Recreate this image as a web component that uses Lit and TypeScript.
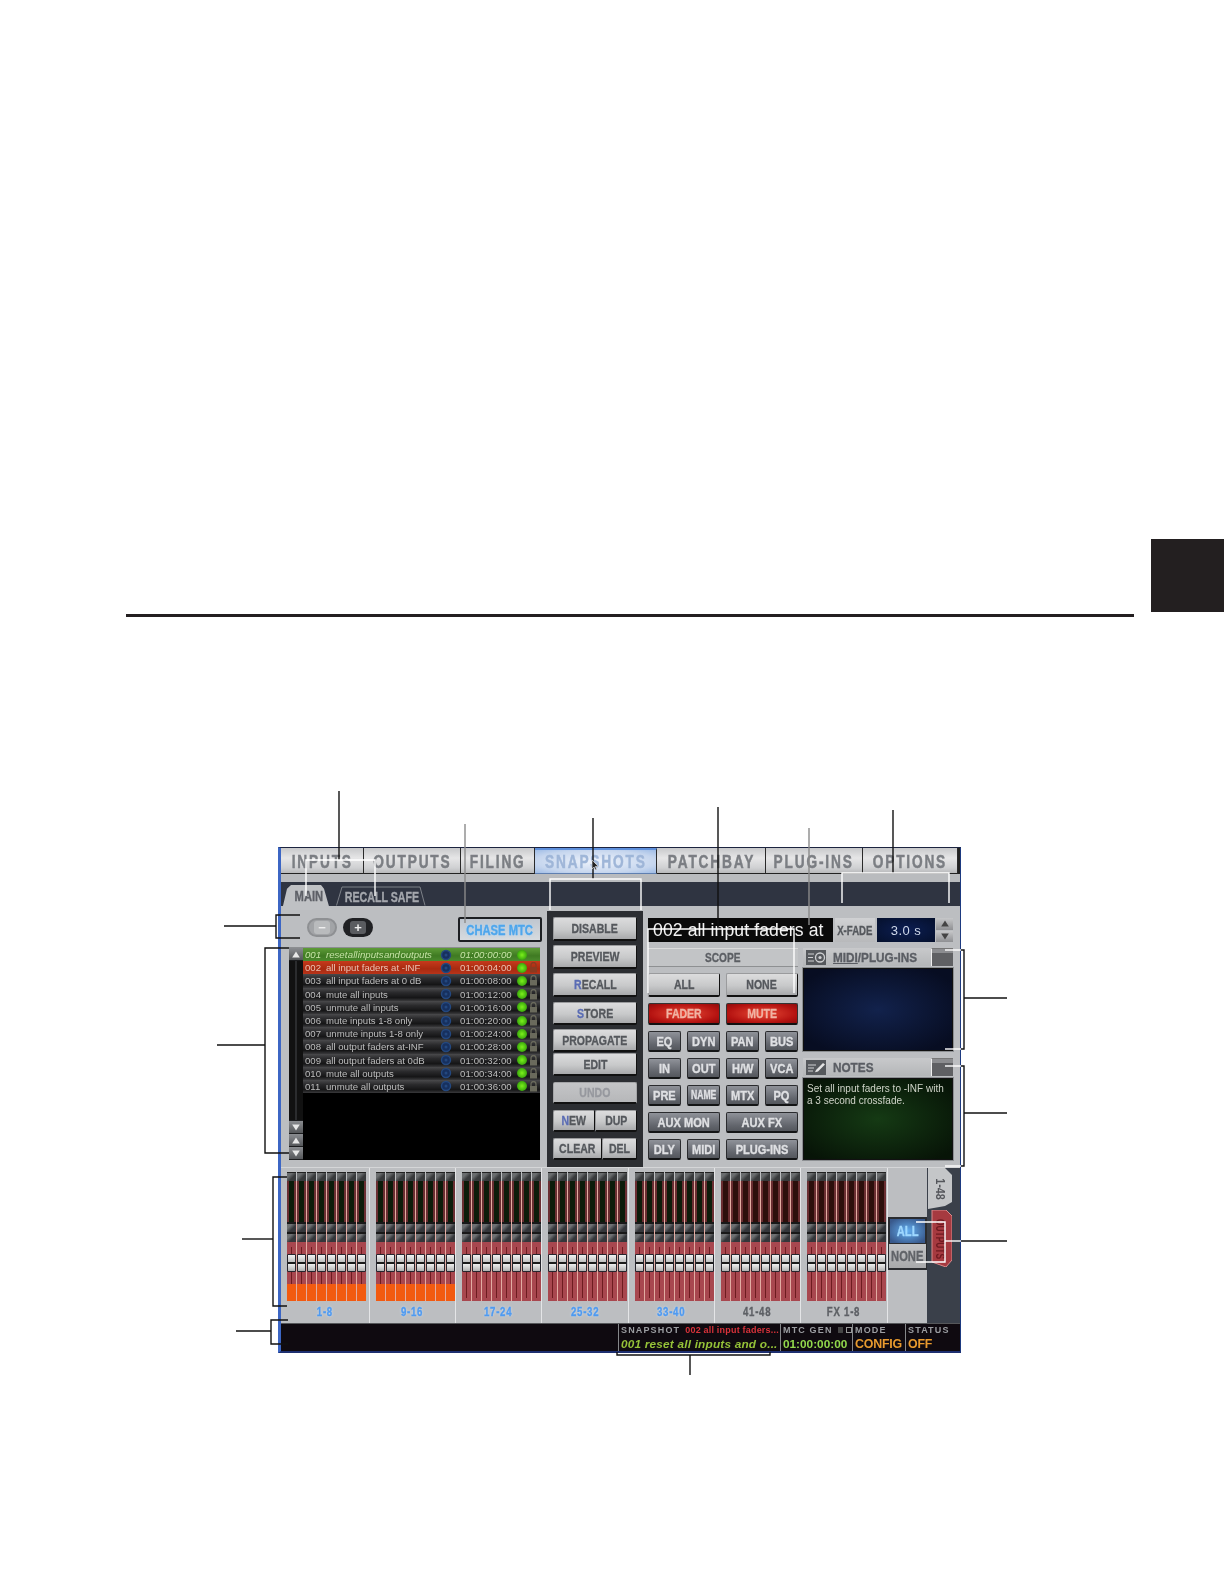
import { LitElement, html, css, svg } from "lit";
import { customElement } from "lit/decorators.js";

const TABS = [
  ["INPUTS", 83], ["OUTPUTS", 97], ["FILING", 74], ["SNAPSHOTS", 122],
  ["PATCHBAY", 109], ["PLUG-INS", 97], ["OPTIONS", 95],
] as const;

const ROWS = [
  ["001", "reset all inputs and outputs", "01:00:00:00", "green"],
  ["002", "all input faders at -INF", "01:00:04:00", "redrow"],
  ["003", "all input faders at 0 dB", "01:00:08:00", ""],
  ["004", "mute all inputs", "01:00:12:00", ""],
  ["005", "unmute all inputs", "01:00:16:00", ""],
  ["006", "mute inputs 1-8 only", "01:00:20:00", ""],
  ["007", "unmute inputs 1-8 only", "01:00:24:00", ""],
  ["008", "all output faders at-INF", "01:00:28:00", ""],
  ["009", "all output faders at 0dB", "01:00:32:00", ""],
  ["010", "mute all outputs", "01:00:34:00", ""],
  ["011", "unmute all outputs", "01:00:36:00", ""],
];

const BANKS = [
  { label: "1-8", w: "b89", hot: true, on: true },
  { label: "9-16", w: "b86", hot: true, on: true },
  { label: "17-24", w: "b86", hot: false, on: true },
  { label: "25-32", w: "b87", hot: false, on: true },
  { label: "33-40", w: "b86", hot: false, on: true },
  { label: "41-48", w: "b86", hot: false, on: false, fx: true },
  { label: "FX 1-8", w: "b87", hot: false, on: false, fx: true },
];

/* callouts: [points, colour] */
const W = "#fff", K = "#111", G = "#8a8a8a";
const LINES: [string, string][] = [
  ["339,791 339,860", K],
  ["306,896 306,860 375,860 375,896", W],
  ["465,824 465,923", G],
  ["593,818 593,879", K],
  ["550,910 550,879 641,879 641,910", W],
  ["718,807 718,929", K],
  ["648,993 648,929 794,929 794,993", W],
  ["809,828 809,925", G],
  ["893,810 893,873", K],
  ["842,903 842,873 949,873 949,903", W],
  ["300,915 276,915 276,938 300,938", K],
  ["224,926 276,926", K],
  ["289,948 265,948 265,1153 289,1153", K],
  ["217,1045 265,1045", K],
  ["287,1177 273,1177 273,1306 287,1306", K],
  ["242,1239 273,1239", K],
  ["288,1320 271,1320 271,1344 288,1344", K],
  ["236,1331 271,1331", K],
  ["945,950 961,950", W],
  ["961,950 964,950 964,1049 961,1049", K],
  ["945,1049 961,1049", W],
  ["964,998 1007,998", K],
  ["945,1066 961,1066", W],
  ["961,1066 964,1066 964,1166 961,1166", K],
  ["945,1166 961,1166", W],
  ["964,1113 1007,1113", K],
  ["916,1222 945,1222 945,1262 916,1262", W],
  ["945,1241 961,1241", W],
  ["961,1241 1007,1241", K],
  ["617,1352 617,1355 770,1355 770,1352", K],
  ["690,1355 690,1375", K],
];

const n = (t: unknown) => html`<span class="n">${t}</span>`;

@customElement("app-root")
export class AppRoot extends LitElement {
  static styles = css`
    :host { display: block; width: 1224px; height: 1584px; background: #fff; position: relative; overflow: hidden;
      font-family: "Liberation Sans", Arial, sans-serif; }
    * { box-sizing: border-box; }
    .n { display: inline-block; white-space: nowrap; flex: none; transform: scaleX(.78); -webkit-text-stroke: .35px currentColor; }
    .head { height: 617px; display: flex; align-items: flex-end; padding-left: 126px; }
    .rule { width: 1008px; height: 3px; background: #231f20; }
    .thumb { width: 73px; height: 73px; background: #231f20; margin-left: 17px; margin-bottom: 5px; }

    .win { width: 683px; height: 506px; margin: 230px 0 0 278px; background: #bcbec1; display: flex; flex-direction: column;
      border-left: 3px solid #3c66c4; border-top: 1px solid #1c2440; border-right: 1px solid #1d3a80; border-bottom: 2px solid #1d2f70;
      filter: blur(.4px); }

    .tabs { display: flex; height: 26px; flex: none; background: #222; }
    .tab { display: flex; align-items: center; justify-content: center; padding-top: 3px; font-weight: 700; font-size: 18px; letter-spacing: 2.4px;
      color: #7b7e83; background: linear-gradient(#c8c9cb, #e6e6e7 40%, #cfd0d2 80%, #b8b9bb); border-right: 1px solid #2a2a2a; border-bottom: 1px solid #222; white-space: nowrap; }
    .tab .n { transform: scaleX(.76); -webkit-text-stroke: .5px currentColor; }
    .tab.on { color: #9fb6d8; background: radial-gradient(ellipse at center, #eef3fb, #c6d6ee 70%, #9fbce6); border-top: 2px solid #5f90dc; border-bottom-color: #5f7fb0; padding-top: 1px; }
    .tab.w83 { width: 83px; } .tab.w97 { width: 97px; } .tab.w74 { width: 74px; } .tab.w122 { width: 122px; }
    .tab.w109 { width: 109px; } .tab.w95 { width: 95px; }

    .gapband { height: 8px; flex: none; background: #b9bbbe; }
    .sub { height: 24px; flex: none; background: #2f3441; display: flex; position: relative; }
    .main-tab { position: absolute; left: 1px; top: 3px; width: 50px; height: 25px; background: #bfc1c4; clip-path: polygon(0 100%, 5px 15%, 9px 0, 39px 0, 42px 15%, 47px 85%, 50px 100%);
      color: #5d5f66; font-weight: 700; font-size: 14px; display: flex; align-items: center; justify-content: center; padding: 0 3px 3px 6px; z-index: 1; }
    .main-tab .n { transform: scaleX(.8); }
    .rs-tab { position: absolute; left: 55px; top: 4px; width: 92px; height: 20px; color: #a4a7ad; font-weight: 700; font-size: 14px; display: flex; align-items: center; justify-content: center; padding-top: 1px; white-space: nowrap; }
    .rs-tab svg { position: absolute; inset: 0; }
    .rs-tab .n { position: relative; transform: scaleX(.76); }

    .panel { flex: none; height: 261px; display: flex; }
    .left { width: 266px; padding: 11px 7px 0 8px; }
    .ctrl { height: 30px; display: flex; align-items: flex-start; padding-left: 18px; }
    .pill { width: 30px; height: 19px; border-radius: 10px; margin-top: 1px; display: flex; align-items: center; justify-content: center; font-weight: 700; font-size: 13px; color: #eee; }
    .pill span { width: 16px; height: 13px; border-radius: 3px; display: flex; align-items: center; justify-content: center; line-height: 1; }
    .pill.minus { background: #a2a4a7; border: 2px solid #8e9093; } .pill.minus span { background: #b9bbbd; }
    .pill.plus { background: #202124; margin-left: 6px; } .pill.plus span { background: #5a5c60; }
    .chase { margin-left: auto; margin-right: -2px; width: 84px; height: 25px; border: 2px solid #1d1f22; border-radius: 2px; background: linear-gradient(#bfc6cf, #d7dbdf);
      color: #4ea6ec; font-weight: 700; font-size: 14px; display: flex; align-items: center; justify-content: center; text-shadow: 0 0 4px #9fd0f7; white-space: nowrap; }
    .chase .n { transform: scaleX(.8); }
    .list { height: 213px; display: flex; background: #000; border-top: 1px solid #8c8e91; }
    .scroll { width: 14px; flex: none; background: #1b1c1e; display: flex; flex-direction: column; }
    .sb { height: 12px; flex: none; background: linear-gradient(#8a8c90, #55575a); display: flex; align-items: center; justify-content: center; margin-bottom: 1px; }
    .track { flex: 1; background: linear-gradient(90deg, #111 40%, #2b2c2e 40%, #2b2c2e 60%, #111 60%); margin-bottom: 1px; }
    .rows { flex: 1; min-width: 0; }
    .row { height: 13.2px; display: grid; grid-template-columns: 23px 110px 20px 61px 10px 1fr; align-items: center; font-size: 9.6px; color: #bdbdbd; white-space: nowrap;
      background: linear-gradient(#4a4a4c, #2a2a2c 35%, #151516 75%, #3a3a3c); overflow: hidden; }
    .row.green { background: linear-gradient(#5e9c38, #3f7a22 60%, #4c8a2e); color: #c8e5a8; font-style: italic; }
    .row.green .nm { word-spacing: -2.2px; }
    .row.redrow { background: linear-gradient(#c63a1c, #a82a10 60%, #b8341a); color: #edc2b4; }
    .row .no { padding-left: 2px; } .row .tm { padding-left: 4px; letter-spacing: .1px; }
    .row .gl { display: flex; justify-content: center; }
    .led { width: 10px; height: 10px; border-radius: 50%; background: radial-gradient(circle, #7cf01c, #3aa80c 70%, #256a10); }
    .lk { display: flex; justify-content: center; }

    .center { width: 96px; height: 256px; margin-top: 5px; background: #2c2e32; padding: 6px 6px 0 6px; display: flex; flex-direction: column; }
    .btn { display: flex; align-items: center; justify-content: center; font-weight: 700; font-size: 13.5px; color: #54575c; background: linear-gradient(#dcdcdd, #c8c9ca 55%, #a8a9ab);
      border-radius: 2px; border: 1px solid #9a9b9d; border-bottom: 2px solid #111; border-right: 1px solid #111; white-space: nowrap; }
    .btn b { color: #5a6cb4; font-weight: 700; }
    .btn.dim { color: #96989e; background: linear-gradient(#c4c5c7, #b6b7b9); border-color: #a4a5a7 #a4a5a7 #111; }
    .h24 { height: 24px; flex: none; } .h23 { height: 23px; flex: none; } .h22 { height: 22px; flex: none; }
    .mt1 { margin-top: 1px; } .mt4 { margin-top: 4px; } .mt5 { margin-top: 5px; } .mt6 { margin-top: 6px; }
    .pair { display: flex; height: 22px; flex: none; }
    .pair .btn { flex: 1; }

    .right { flex: 1; padding: 12px 0 0 5px; }
    .top { display: flex; height: 24px; }
    .title { width: 185px; background: #0a0a0a; color: #f2f2f2; font-size: 17.6px; line-height: 24px; padding-left: 5px; white-space: nowrap; overflow: hidden; letter-spacing: .1px; }
    .xf { width: 40px; margin-left: 2px; background: linear-gradient(#d0d1d3, #b8b9bb); color: #55585d; font-weight: 700; font-size: 13px; display: flex; align-items: center; justify-content: center; white-space: nowrap; }
    .xf .n { transform: scaleX(.74); }
    .val { width: 58px; margin-left: 2px; background: radial-gradient(ellipse at center, #0c1e52, #05102c); color: #cfd8ea; font-size: 13px; display: flex; align-items: center; justify-content: center; letter-spacing: .5px; }
    .spin { width: 17px; margin-left: 1px; display: flex; flex-direction: column; gap: 1px; }
    .spin i { flex: 1; display: flex; align-items: center; justify-content: center; background: linear-gradient(#c6c7c9, #8f9093); }
    .below { display: flex; gap: 5px; margin-top: 6px; }
    .scope { width: 150px; display: grid; grid-template-columns: repeat(4, 33px); grid-template-rows: 19px 24px 22px repeat(5, 21px); gap: 6px; }
    .s4 { grid-column: span 4; } .s2 { grid-column: span 2; }
    .scopehd { display: flex; align-items: center; justify-content: center; color: #5c5f64; font-weight: 700; font-size: 13px; background: #c2c4c6; border-top: 1px solid #dcdcdc; border-bottom: 1px solid #8e9092; }
    .rbtn { display: flex; align-items: center; justify-content: center; font-weight: 700; font-size: 13.5px; color: #f0b4a4; background: radial-gradient(ellipse at center, #e84a36, #b41210 70%, #8c0c0c); border: 1px solid #333; border-bottom: 2px solid #111; border-radius: 2px; }
    .dk { display: flex; align-items: center; justify-content: center; font-weight: 700; font-size: 13px; color: #dfe0e3; background: linear-gradient(#8f9299, #62656c 70%, #54575d); border: 1px solid #2a2b2e; border-bottom: 2px solid #141516; border-radius: 2px; white-space: nowrap; }
    .dk .n { transform: scaleX(.85); }
    .dk.tight .n { font-size: 12px; transform: scaleX(.72); }
    .side { width: 150px; display: flex; flex-direction: column; }
    .shd { height: 18px; display: flex; align-items: center; padding-left: 3px; background: linear-gradient(#c8c9cb, #b4b6b8); flex: none; }
    .shd .t { flex: 1; margin-left: 7px; color: #5a5d63; font-weight: 700; font-size: 13.5px; white-space: nowrap; }
    .shd .t .n { transform: scaleX(.87); transform-origin: left center; }
    .shd svg { flex: none; }
    .folder { width: 22px; height: 18px; flex: none; background: linear-gradient(#8c8d90 25%, #5f6063 25%); border-left: 1px solid #eee; border-top: 1px solid #777; }
    .midi { height: 83px; margin-top: 2px; background: radial-gradient(ellipse at center, #12224c, #070d22 85%); border: 1px solid #111; box-shadow: 0 0 0 1px #8c8f92; flex: none; }
    .notes { height: 82px; margin-top: 2px; background: radial-gradient(ellipse at center, #153a14, #071407 90%); border: 1px solid #111; box-shadow: 0 0 0 1px #8c8f92; color: #cfd3c8; font-size: 10px; line-height: 12px; padding: 4px 3px; flex: none; white-space: nowrap; }
    .mt7 { margin-top: 7px; }

    .mixer { height: 156px; flex: none; display: flex; background: #bcbec1; border-top: 1px solid #d5d6d8; }
    .bank { flex: none; border-right: 1px solid #e4e5e7; display: flex; flex-direction: column; padding: 4px 0 0 6px; }
    .b89 { width: 89px; } .b86 { width: 86px; } .b87 { width: 87px; }
    .strips { width: 79px; display: grid; grid-template-columns: repeat(8, 9px); column-gap: 1px; height: 129px; background: linear-gradient(#bcbec1 9px, #e2aca2 9px); }
    .strip { display: flex; flex-direction: column; background: #a8474f; position: relative; }
    .cap { height: 9px; flex: none; background: linear-gradient(135deg, #6a6d6f 30%, #383a3c 60%); border-top: 1px solid #222; }
    .cap2 { height: 10px; flex: none; background: linear-gradient(135deg, #6e7072 30%, #34363a 60%); border-top: 2px solid #181818; }
    .meter { height: 41px; flex: none; background: #0c1c0a; border-left: 2px solid #6a2e32; border-right: 2px solid #6a2e32; }
    .fx .meter { background: #2c0f0c; }
    .fd { flex: 1; position: relative; display: flex; justify-content: center; }
    .fd::before { content: ""; width: 1px; background: #6e1c20; margin-top: 5px; margin-bottom: 3px; }
    .hot { position: absolute; left: 0; right: 0; bottom: 0; height: 17px; background: #f25a10; }
    .handle { position: absolute; left: 0; right: 0; top: 12px; height: 18px; background: linear-gradient(#f2f2f2, #bdbdbd 45%, #1a1a1a 46%, #1a1a1a 54%, #f0f0f0 55%, #b0b0b0); border: 1px solid #26262e; border-radius: 1px; }
    .blabel { height: 21px; margin-left: -6px; display: flex; align-items: center; justify-content: center; font-weight: 700; font-size: 13px; letter-spacing: 1px; color: #5d6065; }
    .blabel .n { transform: scaleX(.74); }
    .blabel.on { color: #4f9af0; text-shadow: 0 0 3px #cfe2fa; }

    .allnone { width: 39px; flex: none; padding-top: 49px; }
    .allbtn { height: 26px; display: flex; align-items: center; justify-content: center; font-weight: 700; font-size: 14px; border: 1px solid #2a2c30; }
    .allbtn .n { transform: scaleX(.8); }
    .allbtn.a { color: #9fd8ff; background: radial-gradient(ellipse at center, #63aef0, #39598c 85%); border-width: 2px; border-bottom: 0; }
    .allbtn.nn { color: #606368; background: linear-gradient(#c2c3c5, #a8a9ab); height: 27px; border-bottom-width: 2px; }
    .side-tabs { flex: 1; background: #3a404a; position: relative; }
    .vtab { position: absolute; left: 1px; width: 24px; display: flex; align-items: center; justify-content: center; }
    .vtab svg { position: absolute; inset: 0; }
    .vtab span { position: relative; font-weight: 700; white-space: nowrap; font-size: 12px; flex: none; }
    .vt1 { top: 0; height: 41px; } .vt1 span { color: #55575c; transform: rotate(90deg) scaleX(.9); }
    .vt2 { top: 42px; height: 57px; } .vt2 span { color: #6e1a20; transform: rotate(90deg) scaleX(.7); }

    .status { flex: 1; background: #0f0a10; display: flex; min-height: 0; border-top: 1px solid #55575a; }
    .sp { width: 337px; flex: none; }
    .sec { flex: none; border-left: 1px solid #85878a; padding: 1px 0 0 2px; display: flex; flex-direction: column; white-space: nowrap; overflow: hidden; }
    .s1 { width: 162px; } .s2w { width: 72px; } .s3 { width: 53px; } .s4w { flex: 1; }
    .lab { font-size: 9px; font-weight: 700; color: #9c9ea2; letter-spacing: 1.15px; display: flex; align-items: center; height: 11px; }
    .lab em { font-style: normal; color: #d8323a; letter-spacing: .2px; margin-left: 5px; }
    .lab i { display: inline-block; width: 9px; height: 6px; border: 1px solid #999; margin-left: 3px; }
    .lab i.d { background: #444; border-color: #444; margin-left: 5px; }
    .v { font-weight: 700; line-height: 15px; margin-top: 2px; }
    .v.lime { color: #95c238; font-style: italic; font-size: 11.8px; letter-spacing: .2px; }
    .v.grn { color: #92d84c; font-size: 11.8px; letter-spacing: 0; }
    .v.org { color: #e89a2e; font-size: 12.4px; letter-spacing: -.2px; }

    .over { position: absolute; inset: 0; width: 1224px; height: 1584px; pointer-events: none; }
  `;

  private lock(col: string) {
    return html`<svg width="9" height="11" viewBox="0 0 9 11"><path d="M2 5V3a2.5 2.5 0 0 1 5 0v2" fill="none" stroke="${col}" stroke-width="1.3"/><rect x="1" y="5" width="7" height="5.5" fill="${col}"/></svg>`;
  }
  private globe() {
    return html`<svg width="12" height="12" viewBox="0 0 12 12"><circle cx="6" cy="6" r="4.5" fill="#17305e" stroke="#234880" stroke-width="1.4"/><circle cx="6" cy="6" r="1.5" fill="#234880"/></svg>`;
  }
  private tri(up: boolean, fill = "#e8e8e8", size = 8) {
    return html`<svg width="${size}" height="${size - 1}" viewBox="0 0 8 7"><path d="${up ? "M4 0.5L7.8 6.5H.2Z" : "M4 6.5L7.8 .5H.2Z"}" fill="${fill}"/></svg>`;
  }

  private renderList() {
    return html`<div class="list">
      <div class="scroll">
        <div class="sb">${this.tri(true)}</div>
        <div class="track"></div>
        <div class="sb">${this.tri(false)}</div>
        <div class="sb">${this.tri(true)}</div>
        <div class="sb">${this.tri(false)}</div>
      </div>
      <div class="rows">
        ${ROWS.map(([no, name, t, c]) => html`<div class="row ${c}">
          <span class="no">${no}</span><span class="nm">${name}</span>
          <span class="gl">${this.globe()}</span><span class="tm">${t}</span>
          <span class="led"></span>
          <span class="lk">${c === "green" ? "" : this.lock(c === "redrow" ? "#8a3a20" : "#6a6a5c")}</span>
        </div>`)}
      </div>
    </div>`;
  }

  private renderCenter() {
    return html`<div class="center">
      <div class="btn h24">${n("DISABLE")}</div>
      <div class="btn h24 mt4">${n("PREVIEW")}</div>
      <div class="btn h24 mt4">${n(html`<b>R</b>ECALL`)}</div>
      <div class="btn h23 mt5">${n(html`<b>S</b>TORE`)}</div>
      <div class="btn h23 mt4">${n("PROPAGATE")}</div>
      <div class="btn h23 mt1">${n("EDIT")}</div>
      <div class="btn dim h22 mt6">${n("UNDO")}</div>
      <div class="pair mt6"><div class="btn">${n(html`<b>N</b>EW`)}</div><div class="btn">${n("DUP")}</div></div>
      <div class="pair mt6"><div class="btn">${n("CLEAR")}</div><div class="btn">${n("DEL")}</div></div>
    </div>`;
  }

  private renderScope() {
    const small = ["EQ", "DYN", "PAN", "BUS", "IN", "OUT", "H/W", "VCA", "PRE", "NAME", "MTX", "PQ"];
    return html`<div class="scope">
      <div class="scopehd s4">${n("SCOPE")}</div>
      <div class="btn s2">${n("ALL")}</div><div class="btn s2">${n("NONE")}</div>
      <div class="rbtn s2">${n("FADER")}</div><div class="rbtn s2">${n("MUTE")}</div>
      ${small.map((s) => html`<div class="dk ${s === "NAME" ? "tight" : ""}">${n(s)}</div>`)}
      <div class="dk s2">${n("AUX MON")}</div><div class="dk s2">${n("AUX FX")}</div>
      <div class="dk">${n("DLY")}</div><div class="dk">${n("MIDI")}</div><div class="dk s2">${n("PLUG-INS")}</div>
    </div>`;
  }

  private renderSide() {
    return html`<div class="side">
      <div class="shd">
        <svg width="20" height="15" viewBox="0 0 20 15"><rect width="20" height="15" fill="#55585c"/><path d="M2 4h6M2 7.5h5M2 11h6" stroke="#cfd0d2" stroke-width="1.2"/><circle cx="14" cy="7.5" r="4.5" fill="none" stroke="#cfd0d2" stroke-width="1.3"/><circle cx="14" cy="7.5" r="1.6" fill="#cfd0d2"/></svg>
        <span class="t">${n(html`<u>MIDI</u>/PLUG-INS`)}</span><span class="folder"></span>
      </div>
      <div class="midi"></div>
      <div class="shd mt7">
        <svg width="20" height="15" viewBox="0 0 20 15"><rect width="20" height="15" fill="#55585c"/><path d="M2 5h8M2 8h6M2 11h5" stroke="#cfd0d2" stroke-width="1.2"/><path d="M10 10l7-7 2 1.5-7 7-3 .8Z" fill="#e4e4e4"/></svg>
        <span class="t">${n("NOTES")}</span><span class="folder"></span>
      </div>
      <div class="notes">Set all input faders to -INF with<br />a 3 second crossfade.</div>
    </div>`;
  }

  private renderMixer() {
    const eight = [0, 1, 2, 3, 4, 5, 6, 7];
    return html`<div class="mixer">
      ${BANKS.map((b) => html`<div class="bank ${b.w} ${b.fx ? "fx" : ""}">
        <div class="strips">
          ${eight.map(() => html`<div class="strip">
            <div class="cap"></div><div class="meter"></div><div class="cap2"></div><div class="cap2"></div>
            <div class="fd">${b.hot ? html`<div class="hot"></div>` : ""}<div class="handle"></div></div>
          </div>`)}
        </div>
        <div class="blabel ${b.on ? "on" : ""}">${n(b.label)}</div>
      </div>`)}
      <div class="allnone"><div class="allbtn a">${n("ALL")}</div><div class="allbtn nn">${n("NONE")}</div></div>
      <div class="side-tabs">
        <div class="vtab vt1"><svg width="24" height="41" viewBox="0 0 24 41"><path d="M0 0H17L24 7V34L17 38 0 41Z" fill="#c4c6c8"/></svg><span>1-48</span></div>
        <div class="vtab vt2"><svg width="24" height="57" viewBox="0 0 24 57"><path d="M4 0H18L24 6V50L18 57 4 52Z" fill="#a63a40" stroke="#d88a8c"/></svg><span>OUTPUTS</span></div>
      </div>
    </div>`;
  }

  private renderStatus() {
    return html`<div class="status">
      <div class="sp"></div>
      <div class="sec s1"><div class="lab">SNAPSHOT<em>002 all input faders...</em></div><div class="v lime">001 reset all inputs and o...</div></div>
      <div class="sec s2w"><div class="lab">MTC GEN<i class="d"></i><i></i></div><div class="v grn">01:00:00:00</div></div>
      <div class="sec s3"><div class="lab">MODE</div><div class="v org">CONFIG</div></div>
      <div class="sec s4w"><div class="lab">STATUS</div><div class="v org">OFF</div></div>
    </div>`;
  }

  render() {
    return html`
      <div class="head"><div class="rule"></div><div class="thumb"></div></div>
      <div class="win">
        <div class="tabs">
          ${TABS.map(([t, w]) => html`<div class="tab w${w} ${t === "SNAPSHOTS" ? "on" : ""}">${n(t)}</div>`)}
        </div>
        <div class="gapband"></div>
        <div class="sub">
          <div class="main-tab">${n("MAIN")}</div>
          <div class="rs-tab"><svg width="92" height="20" viewBox="0 0 92 20"><path d="M.5 19.5L6 1H84L89 19.5" fill="none" stroke="#7d8188"/></svg>${n("RECALL SAFE")}</div>
        </div>
        <div class="panel">
          <div class="left">
            <div class="ctrl">
              <div class="pill minus"><span>−</span></div>
              <div class="pill plus"><span>+</span></div>
              <div class="chase">${n("CHASE MTC")}</div>
            </div>
            ${this.renderList()}
          </div>
          ${this.renderCenter()}
          <div class="right">
            <div class="top">
              <div class="title">002 all input faders at</div>
              <div class="xf">${n("X-FADE")}</div>
              <div class="val">3.0 s</div>
              <div class="spin"><i>${this.tri(true, "#444")}</i><i>${this.tri(false, "#444")}</i></div>
            </div>
            <div class="below">${this.renderScope()}${this.renderSide()}</div>
          </div>
        </div>
        ${this.renderMixer()}
        ${this.renderStatus()}
      </div>
      <svg class="over" viewBox="0 0 1224 1584">
        ${LINES.map(([p, c]) => svg`<polyline points="${p}" fill="none" stroke="${c}" stroke-width="1.4"/>`)}
        <path d="M592 860l0 9 2-2 1.5 3 1.3-.6-1.5-3h3Z" fill="#222" stroke="#eee" stroke-width=".6"/>
      </svg>
    `;
  }
}
